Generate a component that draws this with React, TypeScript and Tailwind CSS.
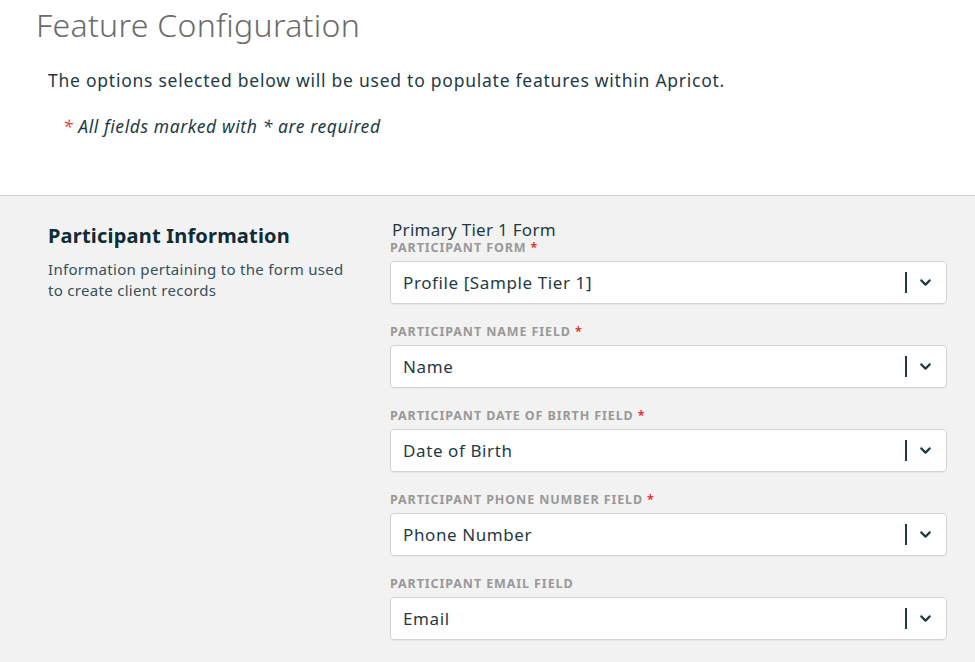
import { ChevronDown } from "lucide-react";

const FIELDS = [
  { label: "Participant Form", value: "Profile [Sample Tier 1]", required: true },
  { label: "Participant Name Field", value: "Name", required: true },
  { label: "Participant Date of Birth Field", value: "Date of Birth", required: true },
  { label: "Participant Phone Number Field", value: "Phone Number", required: true },
  { label: "Participant Email Field", value: "Email", required: false },
];

function SelectBox({ value }: { value: string }) {
  return (
    <div className="flex h-[43px] items-center rounded-[4px] border border-[#d4d4d4] bg-white pl-3 pr-3 shadow-[0_1px_1px_rgba(0,0,0,0.04)]">
      <span className="flex-1 text-[17px] tracking-[0.6px] text-[#1f3a44]">{value}</span>
      <span className="h-[21px] w-[2px] bg-[#1f3a44]" />
      <ChevronDown className="ml-[10px] h-[17px] w-[17px] text-[#1f3a44]" strokeWidth={3} />
    </div>
  );
}

export default function App() {
  return (
    <div className="h-[662px] w-[975px] overflow-hidden bg-white font-['Lato','Noto_Sans',sans-serif]">
      <div className="h-[196px] border-b border-[#d0d0d0] bg-white">
        <h1 className="pl-[36px] pt-[5px] text-[32px] font-light leading-[40px] tracking-[0.3px] text-[#6b6b6b]">
          Feature Configuration
        </h1>
        <p className="mt-[22px] pl-[48px] text-[17.5px] tracking-[0.75px] text-[#1d3b45]">
          The options selected below will be used to populate features within Apricot.
        </p>
        <p className="mt-[20px] pl-[63px] text-[17.5px] italic tracking-[0.6px] text-[#1d3b45]">
          <span className="mr-[5px] text-[#e53935]">*</span>All fields marked with * are required
        </p>
      </div>
      <div className="flex h-full bg-[#f2f2f2] pt-[23px]">
        <div className="w-[390px] pl-[48px] pr-[30px]">
          <h2 className="pt-[4px] text-[20px] font-bold leading-[26px] tracking-[0.2px] text-[#0f2b36]">Participant Information</h2>
          <p className="mt-[10px] text-[15px] leading-[21px] tracking-[0.3px] text-[#37505a]">
            Information pertaining to the form used to create client records
          </p>
        </div>
        <div className="w-[557px]">
          <div className="pl-[2px] text-[17px] leading-[22px] tracking-[0.3px] text-[#1f3a44]">Primary Tier 1 Form</div>
          <div className="flex flex-col gap-[21px]">
            {FIELDS.map((f) => (
              <div key={f.label}>
                <div className="mb-[6px] text-[12.5px] font-bold uppercase leading-[14px] tracking-[0.9px] text-[#999999]">
                  {f.label}
                  {f.required && <span className="ml-[4px] text-[#e53935]">*</span>}
                </div>
                <SelectBox value={f.value} />
              </div>
            ))}
          </div>
        </div>
      </div>
    </div>
  );
}
